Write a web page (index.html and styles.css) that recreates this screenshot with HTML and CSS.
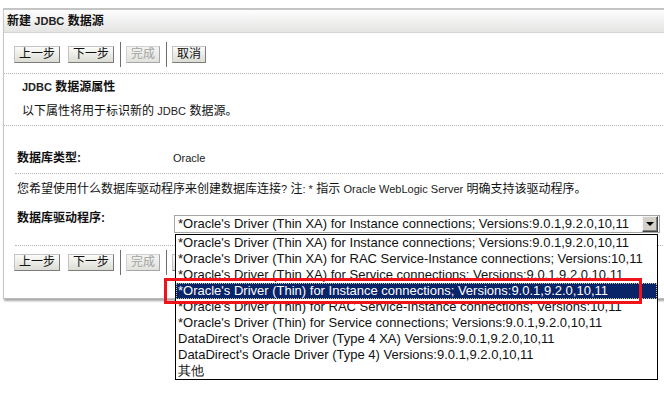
FILE: index.html
```html
<!DOCTYPE html>
<html lang="zh">
<head>
    <meta charset="UTF-8">
    <title>新建 JDBC 数据源</title>
    <link rel="stylesheet" href="styles.css">
</head>
<body>
<div class="panel">
    <div class="panel-hd">新建 <span class="en">JDBC</span> 数据源</div>
    <div class="toolbar">
        <button class="btn">上一步</button>
        <button class="btn">下一步</button>
        <span class="bar"></span>
        <button class="btn" disabled>完成</button>
        <span class="bar"></span>
        <button class="btn">取消</button>
    </div>
    <div class="intro">
        <h2><span class="en">JDBC</span> 数据源属性</h2>
        <p>以下属性将用于标识新的 <span class="en">JDBC</span> 数据源。</p>
    </div>
    <div class="field field-type">
        <label>数据库类型:</label>
        <span class="en">Oracle</span>
    </div>
    <p class="hint">您希望使用什么数据库驱动程序来创建数据库连接<span class="en">?</span> 注<span class="en">: *</span> 指示 <span class="en">Oracle WebLogic Server</span> 明确支持该驱动程序。</p>
    <div class="field field-driver">
        <label>数据库驱动程序:</label>
        <div class="combo">
            <div class="combo-val">*Oracle's Driver (Thin XA) for Instance connections; Versions:9.0.1,9.2.0,10,11</div>
            <span class="combo-arrow"></span>
            <ul class="combo-list">
                <li>*Oracle's Driver (Thin XA) for Instance connections; Versions:9.0.1,9.2.0,10,11</li>
                <li>*Oracle's Driver (Thin XA) for RAC Service-Instance connections; Versions:10,11</li>
                <li>*Oracle's Driver (Thin XA) for Service connections; Versions:9.0.1,9.2.0,10,11</li>
                <li class="on">*Oracle's Driver (Thin) for Instance connections; Versions:9.0.1,9.2.0,10,11</li>
                <li>*Oracle's Driver (Thin) for RAC Service-Instance connections; Versions:10,11</li>
                <li>*Oracle's Driver (Thin) for Service connections; Versions:9.0.1,9.2.0,10,11</li>
                <li>DataDirect's Oracle Driver (Type 4 XA) Versions:9.0.1,9.2.0,10,11</li>
                <li>DataDirect's Oracle Driver (Type 4) Versions:9.0.1,9.2.0,10,11</li>
                <li>其他</li>
            </ul>
            <div class="mark"></div>
        </div>
    </div>
    <div class="toolbar toolbar-bottom">
        <button class="btn">上一步</button>
        <button class="btn">下一步</button>
        <span class="bar"></span>
        <button class="btn" disabled>完成</button>
        <span class="bar"></span>
        <button class="btn">取消</button>
    </div>
</div>
</body>
</html>
```

FILE: styles.css
```css
*{ margin: 0; padding: 0; box-sizing: border-box; }
ul,ol{ list-style: none; }
html{ overflow: hidden; background: #fff; }
body{
    min-height: 393px;
    font: 12px/20px "Liberation Sans", "Noto Sans CJK SC", sans-serif;
    color: #111;
    padding-top: 8px;
}
.en{ font-size: 11px; color: #222; }

.panel{
    width: 720px;
    margin-left: 3px;
    border-top: 2px solid #c4c4c4;
    border-left: 1px solid #c8c8c8;
    border-bottom: 1px solid #bcbcbc;
    box-shadow: 0 3px 2px -1px rgba(0,0,0,.35);
    padding-bottom: 23px;
    background: #fff;
}
.panel-hd{
    height: 23px;
    line-height: 22px;
    padding-left: 3px;
    font-weight: bold;
    background: linear-gradient(#fdfdfd, #e4e5e3);
    border-bottom: 1px solid #d4d4d4;
}
.panel-hd .en{ font-weight: bold; }

/* 按钮条 */
.toolbar{
    display: flex;
    align-items: center;
    height: 25px;
    margin-top: 9px;
    padding-left: 10px;
}
.toolbar-bottom{ margin-top: 4px; }
.btn{
    height: 17px;
    padding: 0 4px;
    margin-right: 8px;
    font: 12px/15px "Liberation Sans", "Noto Sans CJK SC", sans-serif;
    color: #111;
    border: 1px solid;
    border-color: #c4c4c4 #7c7c7c #7c7c7c #c4c4c4;
    background: linear-gradient(#fbfbf9, #dcdcd5);
}
.btn[disabled]{
    color: #a3a3a3;
    border-color: #d2d2d2 #a6a6a6 #a6a6a6 #d2d2d2;
    background: linear-gradient(#f4f4f2, #e2e2dd);
}
.bar{
    width: 1px;
    height: 25px;
    margin: 0 5px 0 -2px;
    background: #6e6e6e;
}

/* 说明区 */
.intro{
    margin-top: 6px;
    padding: 3px 0 4px 18px;
    border-top: 1px dotted #b4b4b4;
    border-bottom: 1px dotted #b4b4b4;
}
.intro h2{ font-size: 12px; line-height: 20px; }
.intro h2 .en{ font-weight: bold; }
.intro p{ margin-top: 4px; }

.field{
    display: flex;
    margin-left: 11px;
    padding-left: 2px;
    border-bottom: 1px dotted #b4b4b4;
}
.field label{
    flex: none;
    width: 157px;
    font-weight: bold;
}
.field-type{ padding-top: 22px; padding-bottom: 5px; }
.field-type .en{ margin-left: -1px; }
.hint{ margin: 5px 0 0 13px; }

.field-driver{
    align-items: flex-start;
    padding-top: 10px;
    padding-bottom: 12px;
}
.field-driver label{ line-height: 18px; }

/* 下拉框 */
.combo{
    position: relative;
    width: 486px;
    height: 18px;
    margin-top: 6px;
    border: 1px solid #a4a4a4;
    font: 13px/16px "Liberation Sans", sans-serif;
    color: #111;
}
.combo-val{ padding-left: 3px; white-space: nowrap; }
.combo-arrow{
    position: absolute;
    right: 1px;
    top: 0;
    width: 16px;
    height: 16px;
    background: #d4d0c8;
    border: 1px solid;
    border-color: #f4f4f4 #404040 #404040 #f4f4f4;
    box-shadow: inset -1px -1px 0 #808080;
}
.combo-arrow:after{
    content: "";
    position: absolute;
    left: 3px;
    top: 5px;
    border: 4px solid transparent;
    border-top: 4px solid #000;
    border-bottom: 0;
}
.combo-list{
    position: absolute;
    left: 0;
    top: 18px;
    width: 483px;
    border: 1px solid #000;
    background: #fff;
    z-index: 2;
}
.combo-list li{
    height: 16px;
    padding-left: 2px;
    white-space: nowrap;
}
.combo-list li.on{
    background: #0a246a;
    color: #fff;
    outline: 1px dotted #c8c89a;
    outline-offset: -1px;
}
.mark{
    position: absolute;
    left: -11px;
    top: 62px;
    width: 478px;
    height: 26px;
    border: 3px solid #f0141a;
    z-index: 3;
}
```
